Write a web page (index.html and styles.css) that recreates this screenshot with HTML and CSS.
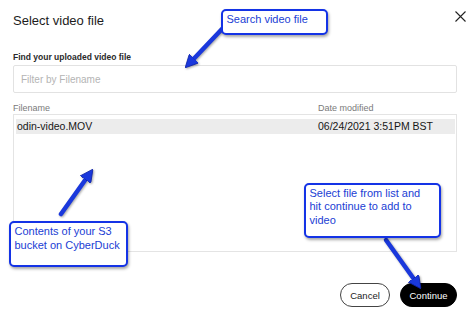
FILE: index.html
```html
<!DOCTYPE html>
<html lang="en">
<head>
  <meta charset="UTF-8">
  <meta name="viewport" content="width=device-width, initial-scale=1.0">
  <title>Select video file</title>
  <link rel="stylesheet" href="styles.css">
</head>
<body>
  <div class="dialog">
    <header class="dialog-header">
      <h1>Select video file</h1>
      <button class="close" aria-label="Close">
        <svg width="11" height="11" viewBox="0 0 11 11">
          <path d="M0.5 0.5 L10.5 10.5 M10.5 0.5 L0.5 10.5" stroke="#222" stroke-width="1.1" fill="none"/>
        </svg>
      </button>
    </header>

    <label class="field-label" for="filter">Find your uploaded video file</label>
    <input type="text" id="filter" class="filter" placeholder="Filter by Filename">

    <div class="columns">
      <span>Filename</span>
      <span>Date modified</span>
    </div>
    <ul class="file-list">
      <li class="file-row selected">
        <span>odin-video.MOV</span>
        <span>06/24/2021 3:51PM BST</span>
      </li>
    </ul>

    <div class="actions">
      <button class="btn btn-cancel">Cancel</button>
      <button class="btn btn-continue">Continue</button>
    </div>
  </div>

  <!-- annotation layer -->
  <svg class="arrows" width="474" height="325" viewBox="0 0 474 325">
    <defs>
      <marker id="head" viewBox="0 0 10 10" refX="4" refY="5" markerWidth="13" markerHeight="13" markerUnits="userSpaceOnUse" orient="auto">
        <path d="M0,0 L10,5 L0,10 z" fill="#1a38dc" stroke="#0d22a8" stroke-width="0.6"/>
      </marker>
    </defs>
    <line x1="222" y1="29" x2="190.5" y2="62.2" class="arrow" marker-end="url(#head)"/>
    <line x1="61" y1="214" x2="88.4" y2="175.5" class="arrow" marker-end="url(#head)"/>
    <line x1="386" y1="240" x2="416.4" y2="282.5" class="arrow" marker-end="url(#head)"/>
  </svg>

  <div class="callout callout-search">Search video file</div>
  <div class="callout callout-bucket">Contents of your S3<br>bucket on CyberDuck</div>
  <div class="callout callout-select">Select file from list and<br>hit continue to add to<br>video</div>
</body>
</html>
```

FILE: styles.css
```css
body {
  margin: 0;
  width: 474px;
  height: 325px;
  background: #fff;
  font-family: 'Liberation Sans', Arial, sans-serif;
  color: #222;
  position: relative;
  overflow: hidden;
}
.dialog {
  padding: 12px 17px 0 13px;
}
.dialog-header {
  display: flex;
  justify-content: space-between;
  height: 18px;
  margin-right: -9px;
}
.dialog-header h1 {
  margin: 0;
  font-size: 13px;
  line-height: 18px;
  font-weight: normal;
  color: #1c1c1c;
}
.close {
  border: none;
  background: none;
  padding: 0;
  width: 11px;
  height: 11px;
  margin-top: -1px;
  display: block;
}
.close svg {
  display: block;
}
.field-label {
  display: block;
  margin-top: 21px;
  font-size: 8.5px;
  line-height: 12px;
  font-weight: bold;
  color: #2a2a2a;
}
.filter {
  display: block;
  box-sizing: border-box;
  width: 100%;
  height: 28px;
  margin-top: 2px;
  padding: 0 7px;
  border: 1px solid #e2e2e2;
  border-radius: 2px;
  font-family: inherit;
  font-size: 10px;
  outline: none;
}
.filter::placeholder {
  color: #b4b4b4;
}
.columns {
  display: grid;
  grid-template-columns: 305px 1fr;
  margin-top: 10px;
  font-size: 9px;
  line-height: 11px;
  color: #7a7a7a;
}
.file-list {
  list-style: none;
  margin: 0;
  box-sizing: border-box;
  height: 138px;
  padding: 4px 1px 0 2px;
  border: 1px solid #e4e4e4;
}
.file-row {
  display: grid;
  grid-template-columns: 301px 1fr;
  height: 15px;
  padding-left: 1px;
  font-size: 10.5px;
  line-height: 15px;
  color: #161616;
}
.file-row.selected {
  background: #ececec;
}
.actions {
  display: flex;
  justify-content: flex-end;
  gap: 10px;
  margin-top: 31px;
}
.btn {
  height: 24px;
  border-radius: 12px;
  font-family: inherit;
  font-size: 9.5px;
  padding: 0;
}
.btn-cancel {
  width: 50px;
  background: #fff;
  border: 1px solid #444;
  color: #222;
}
.btn-continue {
  width: 57px;
  background: #000;
  border: 1px solid #000;
  color: #fff;
}
.arrows {
  position: absolute;
  left: 0;
  top: 0;
  pointer-events: none;
  filter: drop-shadow(1px 1px 1px rgba(0, 0, 0, 0.35));
}
.arrow {
  stroke: #1a38dc;
  stroke-width: 4.5;
  stroke-linecap: round;
}
.callout {
  position: absolute;
  box-sizing: border-box;
  background: #fff;
  border: 2.5px solid #1433e6;
  border-radius: 5px;
  box-shadow: 1px 2px 3px rgba(0, 0, 0, 0.35);
  color: #2140d4;
  font-size: 11px;
  line-height: 13.5px;
  padding: 2px 3.5px;
}
.callout-search {
  left: 221px;
  top: 9px;
  width: 107px;
  height: 26px;
  padding-top: 1.5px;
}
.callout-bucket {
  left: 9px;
  top: 221px;
  width: 119px;
  height: 46px;
}
.callout-select {
  left: 304px;
  top: 183px;
  width: 137px;
  height: 55px;
  padding-top: 1.5px;
}
```
